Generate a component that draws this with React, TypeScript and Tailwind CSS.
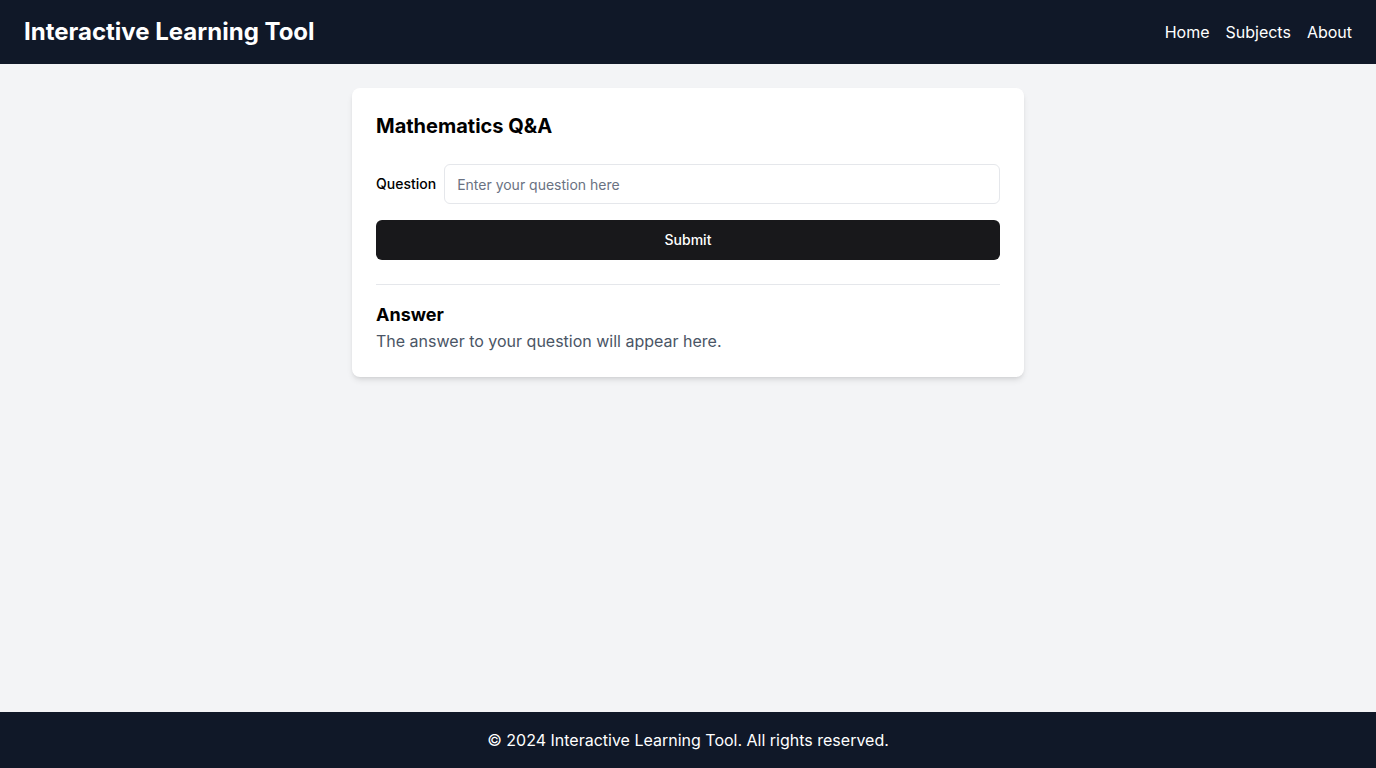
import { useState } from "react"

export default function App() {
  const [question, setQuestion] = useState("")

  return (
    <div
      className="min-h-screen flex flex-col bg-gray-100"
      style={{ fontFamily: "Inter, 'Noto Sans', sans-serif" }}
    >
      {/* Header */}
      <header className="h-16 bg-gray-900 text-white flex items-center justify-between px-6">
        <h1 className="text-2xl font-bold">Interactive Learning Tool</h1>
        <nav className="flex items-center gap-4 text-base">
          <a href="#" className="hover:underline">Home</a>
          <a href="#" className="hover:underline">Subjects</a>
          <a href="#" className="hover:underline">About</a>
        </nav>
      </header>

      {/* Main */}
      <main className="flex-1 p-6">
        <div className="max-w-2xl mx-auto bg-white rounded-lg shadow-md p-6">
          <h2 className="text-xl font-bold text-black mb-6">Mathematics Q&amp;A</h2>

          <form
            onSubmit={(e) => e.preventDefault()}
            className="space-y-4"
          >
            <div className="flex items-center gap-2">
              <label htmlFor="question" className="text-sm font-medium text-black whitespace-nowrap">
                Question
              </label>
              <input
                id="question"
                value={question}
                onChange={(e) => setQuestion(e.target.value)}
                placeholder="Enter your question here"
                className="flex-1 h-10 rounded-md border border-gray-200 px-3 text-sm placeholder:text-gray-500 outline-none"
              />
            </div>
            <button
              type="submit"
              className="w-full h-10 rounded-md bg-[#18181b] text-white text-sm font-medium"
            >
              Submit
            </button>
          </form>

          <div className="mt-6 border-t border-gray-200 pt-4">
            <h3 className="text-lg font-bold text-black">Answer</h3>
            <p className="text-base text-gray-600">The answer to your question will appear here.</p>
          </div>
        </div>
      </main>

      {/* Footer */}
      <footer className="h-14 bg-gray-900 text-white flex items-center justify-center text-base">
        © 2024 Interactive Learning Tool. All rights reserved.
      </footer>
    </div>
  )
}
